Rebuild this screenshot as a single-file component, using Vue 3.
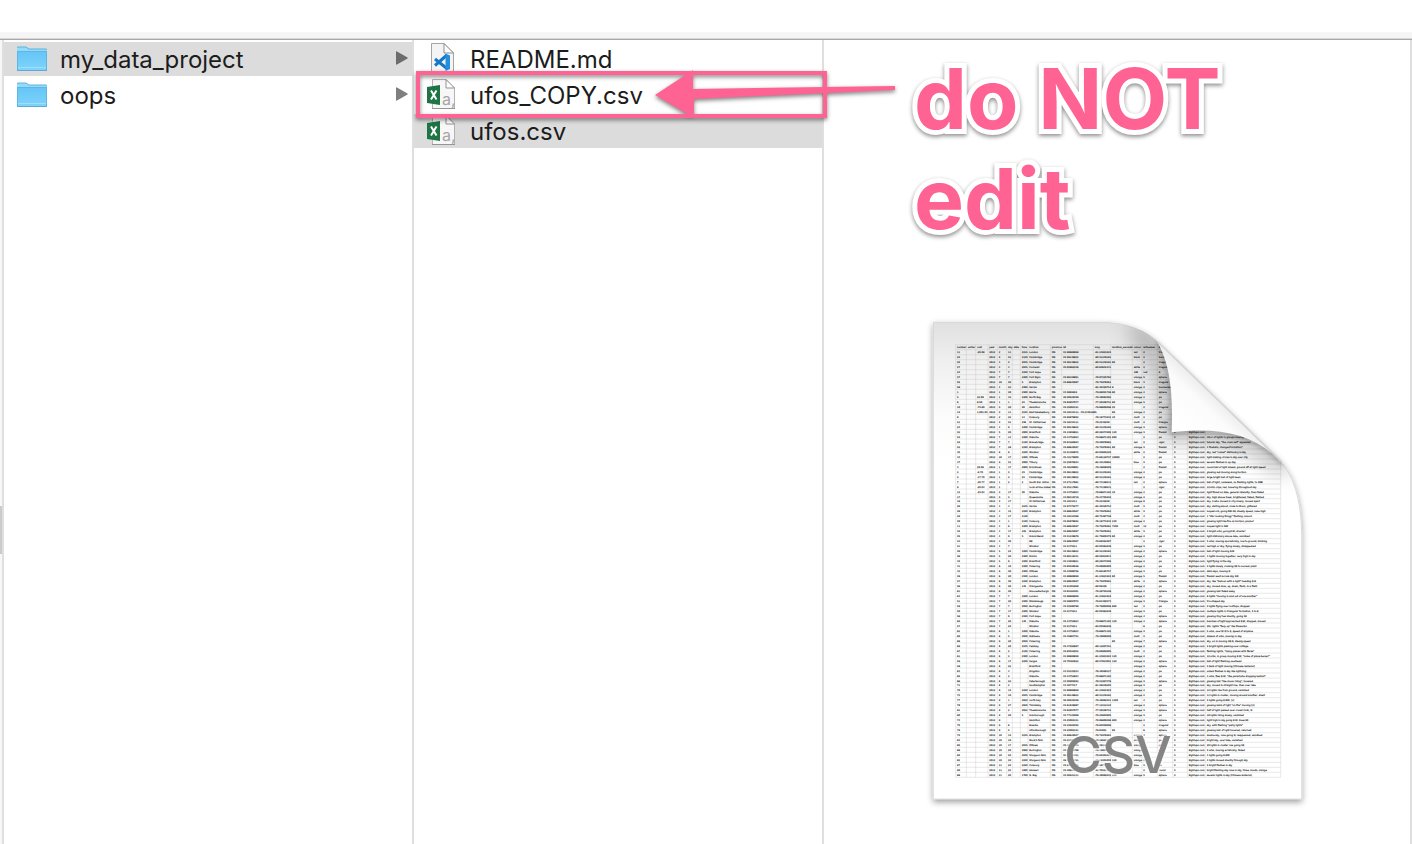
<script setup>
const folders = [
  { name: 'my_data_project', selected: true },
  { name: 'oops', selected: false }
]

const files = [
  { name: 'README.md', kind: 'markdown', selected: false },
  { name: 'ufos_COPY.csv', kind: 'csv', selected: false },
  { name: 'ufos.csv', kind: 'csv', selected: true }
]

const columnEdges = [107, 139, 167, 204, 232, 260, 277, 301, 324, 391, 425, 520, 572, 637, 666, 712, 758, 802, 856, 1082]

const header = ['number', 'outlier', 'cost', 'year', 'month', 'day', 'date', 'time', 'location', 'province', 'lat', 'long', 'duration_seconds', 'colour', 'witnesses', 'shape', '', '', '']

// number|cost|month|day|time|location|lat|long|duration|colour|witnesses|shape|description
const source = `
11|-20.08|2|11|2215|London|42.98689658|-81.24621923||red|2|triangle|
23||3|31|2120|Cambridge|43.36146622|-80.31249181||black|2|boomerang|
25||4|3|2045|Cambridge|43.36146622|-80.31249181|60||2|irregular|
27||4|4|2045|Cornwall|45.02862246|-80.63642441||white|2|irregular|
34||7|7|2230|Port Hope||||180|red|6|disc
37||7|7|2200|Port Elgin|43.89138891|-78.87225784||orange|5|sphere|
55||10|30|5|Brampton|43.68645087|-79.75976361||black|3|irregular|
58||4|22|2300|Sarnia||-82.40429754|8|orange|2|boomerang|
1||1|30|2300|Barrie|44.3893819|-79.69031736|60|orange|2|sphere|
5|22.08|1|15|2200|North Bay|46.30949438|-79.46081092||orange|2|pa|
6|6.50|1|1|23|Thessalonville|43.82857077|-77.20236731|60|orange|5|pa|
10|-73.60|3|20|30|Hamilton|43.25002131|-79.86609396|25||2|irregular|
13|1,001.03|3|11|2245|East Hawkesbury|43.18134111, -79.24461985||60|orange|2|pa|
8||2|22|14|Cobourg|43.95876832|-78.16771942|10|multi|2|pa|
21||3|31|238|St. Catharines|43.18134111|-79.2242948||multi|2|triangle|
24||4|9|2200|Cambridge|43.36146622|-80.31249181||orange|3|sphere|
32||5|20|2000|Brantford|43.13939621|-80.26374395|120|orange|3|fireball|
54||7|14|2200|Oakville|43.44752824|-79.66671102|600||2|pa|18 or of lights in groups moving SE
53||7|7|2130|Bracebridge|45.04165634|-79.30876962||red|2|cigar|tubular sky, "the cross self" appeared
52||7|28|2230|Brampton|43.68649597|-79.75976361|60|orange|3|fireball|4 fireballs, changed formation"
45||8|9|2230|Windsor|42.31493672|-83.03635225||white|2|fireball|sky, red "comet" stationary in sky
44||10|17|2200|Ottawa|45.42179900|-75.69118737|10800||2|pa|light making circles in sky over city
47||9|31|2000|Tilbury|42.25878234|-82.43140661||blue|3|pa|several flashes in up day
4|20.09|1|17|2000|Ermistown|43.46100801|-79.49836509|||2|fireball|round ball of light ahead, ground off at light speed
2|-8.70|1|3|23|Cambridge|43.36146622|-80.31249181||orange|2|pa|glowing red moving along horizon
3|-17.70|1|3|23|Cambridge|43.36146622|-80.31249181||orange|2|pa|large bright ball of light seen
7|-20.77|1|2|2|South Dal. Hilton|44.27117681|-80.74156541||red|2|sphere|ball of light, noiseless, no flashing lights, to NNE
9|-20.04|1|||local airline maker|43.25117681|-79.74156541|||2|cigar|12 slim clips, red, hovering throughout sky
12|-23.04|3|17|30|Oakville|43.44752824|-79.66671102|10|orange|2|pa|light flared on lake, general intensity, then faded
17||3|3||Queensville|44.06419719|-79.44735333||orange|2|pa|sky, high above trees, brightened, faded, flashed
16||3|17||St Catharines|43.1813411|-79.2242948||orange|6|pa|sky, 3 who moved in city slowly, moved apart
26||4|4|2245|Sarnia|42.97473277|-82.40429754||multi|3|pa|sky, darting about, close to Moon, glittered
28||4|15|2230|Brampton|43.68649597|-79.75976361||white|3|pa|looped orb, going NW-SE, steady speed, nose high
29||4|17|2130||43.18134396|-80.75467728||multi|4|pa|1 "star looking thingy" flashing colours
30||4|1|2130|Cobourg|43.95876832|-78.16771942|240|orange|2|pa|glowing light like fire on horizon, plume?
11||4|9|2200|Brampton|43.68649597|-79.75976361|7200|multi|12|pa|looped light in NW
33||4|17|225|Brampton|43.68645097|-79.75976361||white|3|pa|3 bright orbs, going E-W, drusile?
35||4|9|5|Grand Bend|43.31246676|-81.75603379|60|orange|2|pa|light stationary above lake, vanished
34||4|30||NE|43.68645097|-79.69391907|||2|cigar|3 orbs, moving sporadically, low to ground, blinking
31||4|7||Windsor|42.3173211|-83.03361646||orange|3|pa|red high or sky, flying slowly, disappeared
39||5|23|2200|Cambridge|43.36146622|-80.31249181||orange|2|sphere|ball of light moving E-W
36||5|20|2300|Elmira|43.60116441|-80.55813841||orange|2|pa|4 lights moving together, very high in sky
43||5|9|2200|Brantford|43.13939621|-80.26374395||orange|2|pa|light flying in the sky
41||6|10|2200|Pickering|43.83538536|-79.08903905||orange|2|pa|3 lights slowly crossing SE to nuclear plant
42||6|30|2300|Ottawa|45.42086756|-75.69183757||orange|3|pa|dark skys, moving N
38||6|20|2330|London|42.98689658|-81.24621923|60|orange|5|fireball|fireball went across sky SW
57||6|30|2230|Brampton|43.68649597|-79.75976361||white|2|sphere|sky, like "balloon with a light" heading E-N
56||6|30|145|Orangeville|43.91301958|-80.09429||orange|2|pa|sky, moved slow, up, down, flash, in a flash
61||6|30||Gloucesterburgh|43.83164301|-79.26753236||orange|2|sphere|glowing ball faded away
64||7|7|2200|London|42.98689658|-81.24621923||orange|2|pa|8 lights "moving in and out of one another"
51||7|20|2300|Mississauga|43.58897073|-79.64492574||orange|3|triangle|trio-shaped sky
59||7|7|2030|Burlington|43.32580798|-79.79903006|600|red|2|pa|3 lights flying over rooftops, stopped
50||7|17|2200|Windsor|42.3173211|-83.03361646||orange|3|pa|multiple lights in triangular formation, S to E
56||7|9|2330|Port Hope||||orange|4|sphere|glowing tiny fuel silently, going SE
63||7|20|140|Oakville|43.44752824|-79.66671102|120|orange|4|sphere|bunches of light approached E-W, stopped, moved
57||7|23||Windsor|42.3173211|-83.03361646|||6|pa|20+ lights "fiery up" like fireworks
62||8|1|2200|Oakville|43.44752824|-79.66671102||orange|3|pa|5 orbs, over W E to E, speed of airplane
60||8|5|2030|Gatineau|43.45867731|-79.49836509||multi|3|pa|dozens of orbs, moving in day
68||8|20|2030|Pickering|||60|orange|7|sphere|sky, on in moving SE-N, steady speed
69||8|20|2245|Pembay|43.47292697|-80.12937431||orange|2|pa|3 bright lights passing over cottage
67||8|2|2130|Pickering|43.83532022|-79.08903905||multi|2|pa|flashing lights, "many planes with flares"
61||8|3|2300|London|42.98689658|-81.24621923|120|orange|2|pa|12 orbs, in group moving E-W, "noise of plane below?"
59||8|17|2230|Fergus|43.70464622|-80.37814001|120|orange|2|sphere|ball of light flashing overhead
58||8|22||Brantford||||orange|3|sphere|3 balls of light moving [Chinese lanterns]
64||8|4||Kingston|44.23123224|-76.48599127||orange|2|pa|orders flashes in sky like lightning
65||8|2||Oakville|43.44752824|-79.66671102||orange|2|pa|4 orbs, flew E-W, "like parachute dropping behind"
66||8|22||Peterborough|44.30905932|-78.31957476||orange|3|sphere|glowing ball "like moon rising", hovered
71||8|2||Southampton|44.4977417|-81.38246203||orange|3|pa|sky, moved in straight line, then over lake
70||8|13|2230|London|42.98689658|-81.24621923||orange|2|pa|12 lights rise from ground, vanished
72||9|10|2045|Cambridge|43.36146622|-80.31249181||orange|2|pa|11 lights in cluster, moving around another, silent
77||9|1|2020|north bay|46.30949438|-79.46082331|1200|red|4|pa|3 lights going E-NW, [x]
78||9|27|2020|Timiskaby|43.81846987|-77.12212123||orange|2|sphere|glowing balls of light "on fire" moving [x]
81||9|2|2022|Thessalonville|43.82857077|-77.20236731||orange|3|sphere|half of light passed over crowd (5-8), N
80||9|20|5|Scarborough|43.77125008|-79.25604605||orange|3|pa|18 lights rising slowly, vanished
74||9|||Hamilton|43.25002131|-79.86609396|600|orange|2|sphere|light high in sky going E-W, blew 90
75||9|6||Bowdie|43.23929493|-79.65039006|||2|irregular|sky, with flashing "party lights"
79||9|5||Attorsborough|43.25002131|-79.84651|60||6|sphere|glowing ball of light hovered, returned
73||10|13|2245|Brampton|43.68649597|-79.75976361||orange|2|sphere|double sky, rose going N, reappeared, vanished
84||10|10||Muck's falls|43.21399900|-80.18931207||orange|2|pa|bright sky, over lake, vanished
85||10|17|2045|Ottawa|45.42179900|-75.69118737||orange|3|pa|20 lights in cluster row going SE
86||10|20|2000|Burlington|43.32580798|-79.79903006||orange|2|pa|3 orbs, moving erratically, faded
83||10|23|2040|Sturgeon Falls|46.36431411|-79.93201003||orange|2|pa|4 lights going E-NW
82||10|23|2230|Sturgeon Falls|46.36431411|-79.93201003|120|orange|2|pa|4 lights moved silently through sky
87||11|23|2230|Cobourg|43.95876832|-78.16771942||blue|3|pa|3 bright flashes in sky
90||11|22|1900|Haswell|43.48654911|-81.70221103|||2|round|bright flashing sky rose in sky, three clouds, orange
88||11|20|1700|N. Bay|43.30941111|-79.46082942|120|orange|5|sphere|several lights in sky [Chinese lanterns]
`

const records = source.trim().split('\n').map((line) => {
  const [number, cost, month, day, time, place, lat, long, duration, colour, seen, shape, note] = line.split('|')
  return [number, '', cost, '2012', month, day, '', time, place, 'ON', lat, long, duration, colour, seen, shape, '3', 'Eightups.com', note]
})

const lineY = (i) => Math.round(104 + (i * 1283) / 86)
const cells = [header, ...records].flatMap((row, r) =>
  row.map((text, c) => ({ key: r + '-' + c, text, x: columnEdges[c] + 4, y: lineY(r) + 11 })).filter((cell) => cell.text)
)
const lines = Array.from({ length: records.length + 2 }, (_, i) => lineY(i))
</script>

<template>
  <div class="window">
    <div class="toolbar"></div>
    <main class="browser">
      <div class="rail"><span class="thumb"></span></div>

      <ul class="column folders">
        <li v-for="folder in folders" :key="folder.name">
          <button type="button" class="row" :class="{ selected: folder.selected }">
            <svg class="folder" viewBox="0 0 30 26" aria-hidden="true">
              <defs>
                <linearGradient id="folderFace" x1="0" y1="0" x2="0" y2="1">
                  <stop offset="0" stop-color="#66c6f7" />
                  <stop offset="1" stop-color="#7fd4fb" />
                </linearGradient>
              </defs>
              <path d="M0 25V2q0-1 1-1h8l3 2h17q1 0 1 1v21z" fill="#94daf9" />
              <path d="M0 2q0-1 1-1h8l3 2h17q1 0 1 1" fill="none" stroke="#5cb3dc" />
              <path d="M0 6h30v18q0 1-1 1H1q-1 0-1-1z" fill="url(#folderFace)" />
              <path d="M0 5.500h30M.5 5v19M29.500 5v19" stroke="#5cb7e4" fill="none" />
              <path d="M1 21.500h28" stroke="#9be0ff" />
              <path d="M0 24.500h30" stroke="#62a9cd" />
            </svg>
            <span class="name">{{ folder.name }}</span>
            <svg class="chevron" viewBox="0 0 12 16" aria-hidden="true">
              <path d="M0 1Q0 0 1 .5L11.500 6.500Q12 7 11.500 7.500L1 13.500Q0 14 0 13z" />
            </svg>
          </button>
        </li>
      </ul>

      <ul class="column files">
        <li v-for="file in files" :key="file.name">
          <button type="button" class="row" :class="{ selected: file.selected }">
            <svg v-if="file.kind === 'markdown'" class="file" viewBox="0 0 30 32" aria-hidden="true">
              <path d="M5.500.5H18L27.500 10v20.500h-22z" fill="#f4f4f4" stroke="#a5a5a5" />
              <path d="M5 30.500h23" stroke="#8a8a8a" />
              <path d="M18 .5V10h9.500z" fill="#fff" stroke="#8f8f8f" />
              <path d="M9 16L21 25.500M9 22.500L21 12" stroke="#1678c4" stroke-width="3" />
              <path d="M19.500 10.500l4.500 2v13.500l-4.500 2z" fill="#2490dc" />
            </svg>
            <svg v-else class="file" viewBox="0 0 30 32" aria-hidden="true">
              <path d="M6.500.5H20L28.500 9v20.500h-22z" fill="#f7f7f7" stroke="#b3b3b3" />
              <path d="M6 29.500h23" stroke="#969696" />
              <path d="M20 .5V9h8.500z" fill="#fff" stroke="#929292" />
              <path d="M1 8l13-2v20L1 24z" fill="#1f7446" />
              <path d="M5 11.500l5.500 9M10.500 11.500L5 20.500" stroke="#fff" stroke-width="2" />
              <text x="16" y="26" font-size="16" fill="#a6a6a6">a,</text>
            </svg>
            <span class="name">{{ file.name }}</span>
          </button>
        </li>
      </ul>

      <section class="preview">
        <p class="note">do NOT<br />edit</p>
        <svg class="document" viewBox="0 0 1200 1530" role="img" aria-label="CSV document">
          <defs>
            <clipPath id="sheetClip">
              <path d="M40 37H540C620 37 680 60 722 104L1070 440C1120 490 1145 570 1145 680V1467H40z" />
            </clipPath>
            <linearGradient id="sheetTop" x1="0" y1="0" x2="0" y2="1">
              <stop offset="0" stop-color="#e0e0e0" />
              <stop offset=".08" stop-color="#efefef" />
              <stop offset=".2" stop-color="#fcfcfc" />
              <stop offset=".3" stop-color="#fff" />
            </linearGradient>
            <linearGradient id="flap" gradientUnits="userSpaceOnUse" x1="780" y1="350" x2="900" y2="222">
              <stop offset="0" stop-color="#fff" />
              <stop offset=".55" stop-color="#fbfbfb" />
              <stop offset=".85" stop-color="#e9e9e9" />
              <stop offset="1" stop-color="#d0d0d0" />
            </linearGradient>
            <filter id="soft" x="-30%" y="-30%" width="160%" height="160%"><feGaussianBlur stdDeviation="32" /></filter>
            <filter id="tight" x="-30%" y="-30%" width="160%" height="160%"><feGaussianBlur stdDeviation="8" /></filter>
            <filter id="sheetShadow" x="-10%" y="-10%" width="120%" height="120%">
              <feDropShadow dx="0" dy="8" stdDeviation="9" flood-color="#000" flood-opacity=".4" />
            </filter>
          </defs>
          <path filter="url(#sheetShadow)" fill="url(#sheetTop)" stroke="#d0d0d0" stroke-width="2" d="M40 37H540C620 37 680 60 722 104L1070 440C1120 490 1145 570 1145 680V1467H40z" />
          <g clip-path="url(#sheetClip)">
            <path class="rule" :d="lines.map((y) => 'M107 ' + y + 'H1082').join('')" />
            <path class="rule" :d="columnEdges.map((x) => 'M' + x + ' 104V' + lines[lines.length - 1]).join('')" />
            <text v-for="cell in cells" :key="cell.key" class="cell" :x="cell.x" :y="cell.y">{{ cell.text }}</text>
            <path d="M640 50C710 110 745 190 756 366C900 350 1020 380 1100 480" fill="none" stroke="#000" stroke-opacity=".3" stroke-width="50" filter="url(#soft)" />
            <path d="M712 95C748 160 760 240 755 367C900 350 1010 372 1088 462" fill="none" stroke="#000" stroke-opacity=".35" stroke-width="10" filter="url(#tight)" />
          </g>
          <path d="M712 95C748 160 760 240 755 367C900 350 1010 372 1088 462L722 104z" fill="url(#flap)" />
          <path d="M714 96L1086 456" stroke="#d4d4d4" stroke-width="5" />
          <text x="433" y="1388" class="format">CSV</text>
        </svg>
      </section>
    </main>

    <svg class="callout" viewBox="0 0 500 70" aria-hidden="true">
      <g class="marks">
        <rect x="8" y="13" width="407" height="43" fill="none" stroke="#ff6393" stroke-width="4" />
        <path d="M245 35L283 10V29L485 26V30L284 39V58z" fill="#ff6393" />
      </g>
    </svg>
  </div>
</template>

<style>
body {
  background: #fff;
}
</style>

<style scoped>
.window {
  position: relative;
  display: flex;
  flex-direction: column;
  min-height: 100vh;
  background: #fff;
  font-family: Inter, "Liberation Sans", sans-serif;
  color: #1c1c1c;
}

.toolbar {
  box-sizing: border-box;
  height: 40px;
  border-bottom: 1px solid #a8a8a8;
  background: linear-gradient(#fff 32px, #f5f5f5 32px, #f5f5f5 38px, #d6d6d6 38px);
}

.browser {
  flex: 1;
  display: grid;
  grid-template-columns: 4px minmax(0, 41fr) minmax(0, 41fr) minmax(0, 588px);
}

.rail {
  display: flex;
  align-items: center;
  border-right: 2px solid #dfdfdf;
  background: #f7f7f7;
}

.thumb {
  width: 2px;
  height: 48px;
  margin-bottom: -176px;
  background: #cbcbcb;
}

.column {
  display: flex;
  flex-direction: column;
  gap: 2px;
  margin: 0;
  padding: 2px 0 0;
  border-right: 2px solid #dfdfdf;
  list-style: none;
}

.row {
  display: flex;
  align-items: center;
  width: 100%;
  height: 34px;
  border: 0;
  background: none;
  color: inherit;
  font: inherit;
  font-size: 24px;
  line-height: 34px;
  text-align: left;
}

.folders .row {
  gap: 13px;
  padding: 0 4px 0 13px;
}

.files .row {
  gap: 14px;
  padding: 0 4px 0 12px;
}

.selected {
  background: #dcdcdc;
}

.name {
  flex: 1;
  padding-top: 2px;
}

.folder {
  width: 30px;
  height: 26px;
}

.chevron {
  width: 12px;
  height: 16px;
  fill: #7f7f7f;
}

.selected .chevron {
  fill: #6c6c6c;
}

.file {
  width: 30px;
  height: 32px;
}

.preview {
  display: flex;
  flex-direction: column;
  align-items: flex-start;
  border-right: 2px solid #dfdfdf;
}

.note {
  margin: 9px 0 61px 90px;
  color: #ff6393;
  font-size: 84px;
  font-weight: 700;
  line-height: 100px;
  -webkit-text-stroke: 10px #fff;
  paint-order: stroke fill;
  stroke-linejoin: round;
  filter: drop-shadow(0 2px 2px rgba(0, 0, 0, 0.45));
}

.document {
  width: 400px;
  height: 510px;
  margin-left: 96px;
}

.rule {
  fill: none;
  stroke: #bdbdbd;
  stroke-width: 1px;
}

.cell {
  fill: #000;
  stroke: #000;
  stroke-opacity: 0.3;
  stroke-width: 1px;
  font-family: "DejaVu Sans", sans-serif;
  font-size: 7px;
}

.format {
  fill: #858585;
  stroke: #fff;
  stroke-opacity: 0.5;
  stroke-width: 10px;
  paint-order: stroke;
  font-family: Inter, sans-serif;
  font-size: 154px;
  font-weight: 500;
}

.callout {
  position: absolute;
  top: 60px;
  left: 410px;
  width: 500px;
  height: 70px;
  pointer-events: none;
}

.marks {
  filter: drop-shadow(0 2px 2px rgba(0, 0, 0, 0.5));
}
</style>
